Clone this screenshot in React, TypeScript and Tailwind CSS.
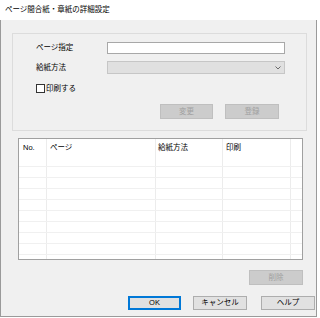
import React from "react";

const FONT = { fontFamily: '"Liberation Sans", "Noto Sans CJK JP", sans-serif' };

const DisabledButton = ({ label, className }: { label: string; className?: string }) => (
  <div
    className={`h-[15px] flex items-center justify-center bg-[#cccccc] border border-[#bfbfbf] text-[#a0a0a0] ${className ?? ""}`}
  >
    {label}
  </div>
);

const PushButton = ({ label, isDefault, className }: { label: string; isDefault?: boolean; className?: string }) => (
  <div
    className={`h-[14px] flex items-center justify-center bg-[#e1e1e1] text-black ${
      isDefault ? "border-2 border-[#0078d7]" : "border border-[#adadad]"
    } ${className ?? ""}`}
  >
    {label}
  </div>
);

const ListRow = ({ header }: { header?: boolean }) => (
  <div className={`flex flex-row ${header ? "h-[17px]" : "h-[11px] border-b border-[#f0f0f0]"}`}>
    <div className="w-[28px] border-r border-[#ececec] pl-[4px] flex items-center">{header ? "No." : ""}</div>
    <div className="w-[109px] border-r border-[#ececec] pl-[3px] flex items-center">{header ? "ページ" : ""}</div>
    <div className="w-[67px] border-r border-[#ececec] pl-[2px] flex items-center">{header ? "給紙方法" : ""}</div>
    <div className="w-[68px] border-r border-[#ececec] pl-[3px] flex items-center">{header ? "印刷" : ""}</div>
    <div className="flex-1"></div>
  </div>
);

export default function App() {
  const rows = Array.from({ length: 9 });

  return (
    <div className="w-[320px] h-[318px] bg-white text-[7.5px] leading-none text-black" style={FONT}>
      <div className="w-[317px] h-[317px] flex flex-col">
        {/* title bar */}
        <div className="h-[20px] pl-[5px] flex items-center bg-white">ページ間合紙・章紙の詳細設定</div>

        {/* dialog body */}
        <div className="flex-1 flex flex-col bg-[#f0f0f0] border-l border-r border-b border-[#9a9a9a]">
          {/* settings group */}
          <div className="ml-[11px] mt-[13px] w-[295px] h-[98px] border border-[#dcdcdc] flex flex-col pl-[23px] pt-[8px]">
            <div className="flex flex-row items-center h-[12px]">
              <div className="w-[71px]">ページ指定</div>
              <div className="w-[178px] h-[12px] bg-white border border-[#a8a8a8]"></div>
            </div>

            <div className="flex flex-row items-center h-[13px] mt-[7px]">
              <div className="w-[71px]">給紙方法</div>
              <div className="w-[178px] h-[13px] bg-[#e0e0e0] border border-[#c6c6c6] flex items-center justify-end pr-[3px]">
                <svg width="6" height="4" viewBox="0 0 6 4">
                  <path d="M0.5 0.5 L3 3 L5.5 0.5" fill="none" stroke="#6a6a6a" strokeWidth="1" />
                </svg>
              </div>
            </div>

            <div className="flex flex-row items-center mt-[10px] h-[9px] gap-[1px]">
              <div className="w-[9px] h-[9px] bg-white border border-[#333333]"></div>
              <div>印刷する</div>
            </div>

            <div className="flex flex-row mt-[11px] ml-[124px] gap-[12px]">
              <DisabledButton label="変更" className="w-[53px]" />
              <DisabledButton label="登録" className="w-[54px]" />
            </div>
          </div>

          {/* page list */}
          <div className="ml-[17px] mt-[7px] w-[285px] h-[122px] bg-white border border-[#a0a0a0] flex flex-col overflow-hidden">
            <ListRow header />
            {rows.map((_, i) => (
              <ListRow key={i} />
            ))}
            <div className="flex-1 flex flex-row">
              <div className="w-[28px] border-r border-[#ececec]"></div>
              <div className="w-[109px] border-r border-[#ececec]"></div>
              <div className="w-[67px] border-r border-[#ececec]"></div>
              <div className="w-[68px] border-r border-[#ececec]"></div>
            </div>
          </div>

          <div className="flex flex-row ml-[248px] mt-[10px]">
            <DisabledButton label="削除" className="w-[54px]" />
          </div>

          {/* dialog buttons */}
          <div className="flex flex-row ml-[127px] mt-[11px] gap-[12px]">
            <PushButton label="OK" isDefault className="w-[53px]" />
            <PushButton label="キャンセル" className="w-[54px]" />
            <PushButton label="ヘルプ" className="w-[54px] ml-[2px]" />
          </div>
        </div>
      </div>
    </div>
  );
}
